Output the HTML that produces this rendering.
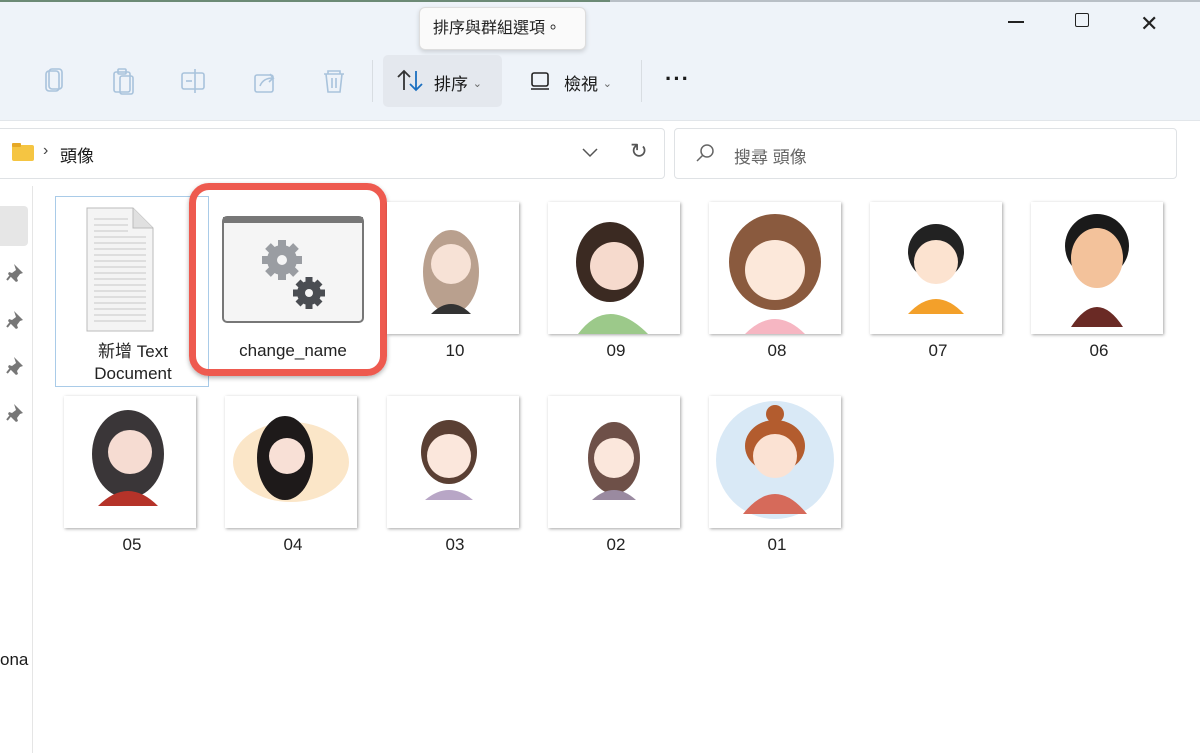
<!DOCTYPE html>
<html><head><meta charset="utf-8"><style>
*{margin:0;padding:0;box-sizing:border-box}
body{width:1200px;height:753px;overflow:hidden;background:#fff;font-family:"Liberation Sans","Noto Sans CJK TC",sans-serif;position:relative;color:#1a1a1a}
.top{position:absolute;left:0;top:0;width:1200px;height:121px;background:#eef3f9;border-bottom:1px solid #e2e6ea}
.a{position:absolute}
.tile{position:absolute;width:132px;height:132px;background:#fff;box-shadow:1px 1px 3px rgba(0,0,0,.35)}
.lbl{position:absolute;width:160px;text-align:center;font-size:17px;color:#222}
</style></head><body>
<div class="top"></div>
<div class="a" style="left:0;top:0;width:610px;height:2px;background:#6c8a76"></div>
<div class="a" style="left:610px;top:0;width:590px;height:2px;background:#b8bfc6"></div>
<div class="a" style="left:1008px;top:21px;width:16px;height:1.5px;background:#222"></div>
<div class="a" style="left:1075px;top:13px;width:14px;height:14px;border:1.5px solid #222;border-radius:2px"></div>
<div class="a" style="left:1140px;top:11px;font-size:22px;color:#222">✕</div>
<div class="a" style="left:419px;top:7px;width:167px;height:43px;background:#fafafa;border:1px solid #ddd;border-radius:6px;box-shadow:0 2px 5px rgba(0,0,0,.15);font-size:16px;line-height:41px;padding-left:13px;color:#222">排序與群組選項。</div>
<svg class="a" style="left:40px;top:66px" width="320" height="32" fill="none" stroke="#a9c3dc" stroke-width="1.6">
<rect x="6" y="5" width="13" height="20" rx="3"/><rect x="9" y="3" width="13" height="20" rx="3"/>
<rect x="74" y="6" width="16" height="20" rx="2"/><rect x="80" y="10" width="13" height="18" rx="2"/><rect x="78" y="3" width="8" height="5" rx="1"/>
<rect x="142" y="7" width="22" height="16" rx="2"/><line x1="155" y1="3" x2="155" y2="27"/><line x1="146" y1="15" x2="152" y2="15"/>
<rect x="215" y="9" width="18" height="17" rx="2"/><path d="M220 20 q3-8 13-8 l-3-4 M233 12 l-4 4"/>
<path d="M284 8 h20 M288 8 v-3 h12 v3 M286 8 l2 18 h12 l2-18 M292 12 v10 M296 12 v10"/>
</svg>
<div class="a" style="left:372px;top:60px;width:1px;height:42px;background:#d8dde2"></div>
<div class="a" style="left:383px;top:55px;width:119px;height:52px;background:#e4e8ee;border-radius:5px"></div>
<svg class="a" style="left:396px;top:68px" width="30" height="26" fill="none" stroke-width="1.8"><path d="M8 22V3 M2 9l6-6 6 6" stroke="#333"/><path d="M20 3v19 M14 16l6 6 6-6" stroke="#1a6fc0"/></svg>
<div class="a" style="left:434px;top:70px;font-size:17px">排序 <span style="font-size:11px;color:#666;position:relative;top:-3px">⌄</span></div>
<svg class="a" style="left:529px;top:70px" width="24" height="22" fill="none" stroke="#222" stroke-width="1.6"><rect x="3" y="3" width="16" height="13" rx="2"/><line x1="2" y1="19" x2="20" y2="19"/></svg>
<div class="a" style="left:564px;top:70px;font-size:17px">檢視 <span style="font-size:11px;color:#666;position:relative;top:-3px">⌄</span></div>
<div class="a" style="left:641px;top:60px;width:1px;height:42px;background:#d8dde2"></div>
<div class="a" style="left:665px;top:66px;font-size:22px;letter-spacing:1px;font-weight:bold">···</div>
<div class="a" style="left:-4px;top:128px;width:669px;height:51px;border:1px solid #dfe2e5;border-radius:4px;background:#fff"></div>
<div class="a" style="left:12px;top:145px;width:22px;height:16px;background:#f5c542;border-radius:2px"></div>
<div class="a" style="left:12px;top:143px;width:9px;height:4px;background:#e6a826;border-radius:1px"></div>
<div class="a" style="left:43px;top:142px;font-size:16px;color:#444">›</div>
<div class="a" style="left:60px;top:142px;font-size:17px">頭像</div>
<svg class="a" style="left:581px;top:146px" width="18" height="12" fill="none" stroke="#555" stroke-width="1.5"><path d="M2 3l7 7 7-7"/></svg>
<div class="a" style="left:630px;top:139px;font-size:21px;color:#555">↻</div>
<div class="a" style="left:674px;top:128px;width:503px;height:51px;border:1px solid #dfe2e5;border-radius:4px;background:#fff"></div>
<svg class="a" style="left:694px;top:143px" width="22" height="22" fill="none" stroke="#666" stroke-width="1.5"><circle cx="13" cy="8" r="6"/><line x1="9" y1="12" x2="3" y2="18"/></svg>
<div class="a" style="left:734px;top:143px;font-size:17px;color:#666">搜尋 頭像</div>
<div class="a" style="left:32px;top:186px;width:1px;height:567px;background:#e5e5e5"></div>
<div class="a" style="left:0;top:206px;width:28px;height:40px;background:#e6e6e6;border-radius:0 4px 4px 0"></div>
<svg class="a" style="left:6px;top:262px" width="20" height="170" fill="#777">
<g><path d="M8 2l9 9-3 1-3 4 1 3-2 1-8-8 1-2 3 1 4-3z"/><path d="M5 13l-4 5" stroke="#777" stroke-width="2"/></g>
<g transform="translate(0,47)"><path d="M8 2l9 9-3 1-3 4 1 3-2 1-8-8 1-2 3 1 4-3z"/><path d="M5 13l-4 5" stroke="#777" stroke-width="2"/></g>
<g transform="translate(0,93)"><path d="M8 2l9 9-3 1-3 4 1 3-2 1-8-8 1-2 3 1 4-3z"/><path d="M5 13l-4 5" stroke="#777" stroke-width="2"/></g>
<g transform="translate(0,140)"><path d="M8 2l9 9-3 1-3 4 1 3-2 1-8-8 1-2 3 1 4-3z"/><path d="M5 13l-4 5" stroke="#777" stroke-width="2"/></g>
</svg>
<div class="a" style="left:0;top:650px;font-size:17px">ona</div>
<div class="a" style="left:55px;top:196px;width:154px;height:191px;border:1px solid #a9cbe8;background:#fff"></div>
<svg class="a" style="left:86px;top:207px" width="68" height="125"><path d="M1 1h46l20 20v103H1z" fill="#f4f4f4" stroke="#bbb"/><path d="M47 1v20h20" fill="#e0e0e0" stroke="#bbb"/>
<g stroke="#c8c8c8"><line x1="8" y1="12" x2="42" y2="12"/><line x1="8" y1="18" x2="42" y2="18"/><line x1="8" y1="24" x2="42" y2="24"/><line x1="8" y1="30" x2="60" y2="30"/><line x1="8" y1="36" x2="60" y2="36"/><line x1="8" y1="42" x2="60" y2="42"/><line x1="8" y1="48" x2="60" y2="48"/><line x1="8" y1="54" x2="60" y2="54"/><line x1="8" y1="60" x2="60" y2="60"/><line x1="8" y1="66" x2="60" y2="66"/><line x1="8" y1="72" x2="60" y2="72"/><line x1="8" y1="78" x2="60" y2="78"/><line x1="8" y1="84" x2="60" y2="84"/><line x1="8" y1="90" x2="60" y2="90"/><line x1="8" y1="96" x2="60" y2="96"/><line x1="8" y1="102" x2="60" y2="102"/><line x1="8" y1="108" x2="60" y2="108"/><line x1="8" y1="114" x2="60" y2="114"/></g></svg>
<div class="lbl" style="left:53px;top:341px;line-height:22px">新增 Text<br>Document</div>
<div class="a" style="left:189px;top:183px;width:198px;height:193px;border:7px solid #ee5a4f;border-radius:20px;box-shadow:0 2px 5px rgba(0,0,0,.3)"></div>
<svg class="a" style="left:221px;top:215px" width="144" height="110"><rect x="2" y="2" width="140" height="105" rx="4" fill="#f5f5f5" stroke="#777" stroke-width="2"/><rect x="2" y="2" width="140" height="6" fill="#777"/>
<g fill="#9a9da2"><circle cx="61" cy="45" r="15"/><g stroke="#9a9da2" stroke-width="8"><line x1="61" y1="25" x2="61" y2="65"/><line x1="41" y1="45" x2="81" y2="45"/><line x1="47" y1="31" x2="75" y2="59"/><line x1="75" y1="31" x2="47" y2="59"/></g><circle cx="61" cy="45" r="5" fill="#f5f5f5"/></g>
<g fill="#4a4d52"><circle cx="88" cy="78" r="12"/><g stroke="#4a4d52" stroke-width="7"><line x1="88" y1="62" x2="88" y2="94"/><line x1="72" y1="78" x2="104" y2="78"/><line x1="77" y1="67" x2="99" y2="89"/><line x1="99" y1="67" x2="77" y2="89"/></g><circle cx="88" cy="78" r="4" fill="#f5f5f5"/></g></svg>
<div class="lbl" style="left:213px;top:341px">change_name</div>
<div class="tile" style="left:387px;top:202px"><svg width="132" height="132"><ellipse cx="64" cy="70" rx="28" ry="42" fill="#b9a08e"/><circle cx="64" cy="62" r="20" fill="#f7e2d6"/><path d="M44 112q20-20 40 0z" fill="#333"/></svg></div>
<div class="lbl" style="left:375px;top:341px">10</div>
<div class="tile" style="left:548px;top:202px"><svg width="132" height="132"><ellipse cx="62" cy="60" rx="34" ry="40" fill="#3b2a22"/><circle cx="66" cy="64" r="24" fill="#f6dacd"/><path d="M30 132q30-40 70 0z" fill="#9cc98a"/></svg></div>
<div class="lbl" style="left:536px;top:341px">09</div>
<div class="tile" style="left:709px;top:202px"><svg width="132" height="132"><ellipse cx="66" cy="60" rx="46" ry="48" fill="#8a5a3e"/><circle cx="66" cy="68" r="30" fill="#fce8da"/><path d="M36 132q30-30 60 0z" fill="#f6b6c2"/></svg></div>
<div class="lbl" style="left:697px;top:341px">08</div>
<div class="tile" style="left:870px;top:202px"><svg width="132" height="132"><circle cx="66" cy="50" r="28" fill="#222"/><circle cx="66" cy="60" r="22" fill="#fce3d0"/><path d="M38 112q28-30 56 0z" fill="#f3a02a"/></svg></div>
<div class="lbl" style="left:858px;top:341px">07</div>
<div class="tile" style="left:1031px;top:202px"><svg width="132" height="132"><circle cx="66" cy="44" r="32" fill="#1a1a1a"/><ellipse cx="66" cy="56" rx="26" ry="30" fill="#f3c29b"/><path d="M40 125q26-40 52 0z" fill="#6a2a25"/></svg></div>
<div class="lbl" style="left:1019px;top:341px">06</div>
<div class="tile" style="left:64px;top:396px"><svg width="132" height="132"><ellipse cx="64" cy="58" rx="36" ry="44" fill="#3a3638"/><circle cx="66" cy="56" r="22" fill="#f6dcd2"/><path d="M34 110q30-30 60 0z" fill="#b53329"/></svg></div>
<div class="lbl" style="left:52px;top:535px">05</div>
<div class="tile" style="left:225px;top:396px"><svg width="132" height="132"><ellipse cx="66" cy="66" rx="58" ry="40" fill="#fbe6c8"/><ellipse cx="60" cy="62" rx="28" ry="42" fill="#1e1a1a"/><circle cx="62" cy="60" r="18" fill="#f8e0d6"/></svg></div>
<div class="lbl" style="left:213px;top:535px">04</div>
<div class="tile" style="left:387px;top:396px"><svg width="132" height="132"><ellipse cx="62" cy="56" rx="28" ry="32" fill="#5a3f33"/><circle cx="62" cy="60" r="22" fill="#fbe7dc"/><path d="M38 104q24-20 48 0z" fill="#b8a6c6"/></svg></div>
<div class="lbl" style="left:375px;top:535px">03</div>
<div class="tile" style="left:548px;top:396px"><svg width="132" height="132"><ellipse cx="66" cy="62" rx="26" ry="36" fill="#6e5048"/><circle cx="66" cy="62" r="20" fill="#fbe7dc"/><path d="M44 104q22-20 44 0z" fill="#9a8aa0"/></svg></div>
<div class="lbl" style="left:536px;top:535px">02</div>
<div class="tile" style="left:709px;top:396px"><svg width="132" height="132"><circle cx="66" cy="64" r="59" fill="#d9e9f6"/><circle cx="66" cy="18" r="9" fill="#b35c2e"/><ellipse cx="66" cy="50" rx="30" ry="26" fill="#b35c2e"/><circle cx="66" cy="60" r="22" fill="#fbe2d3"/><path d="M34 118q32-40 64 0z" fill="#d66a5a"/></svg></div>
<div class="lbl" style="left:697px;top:535px">01</div>
</body></html>
